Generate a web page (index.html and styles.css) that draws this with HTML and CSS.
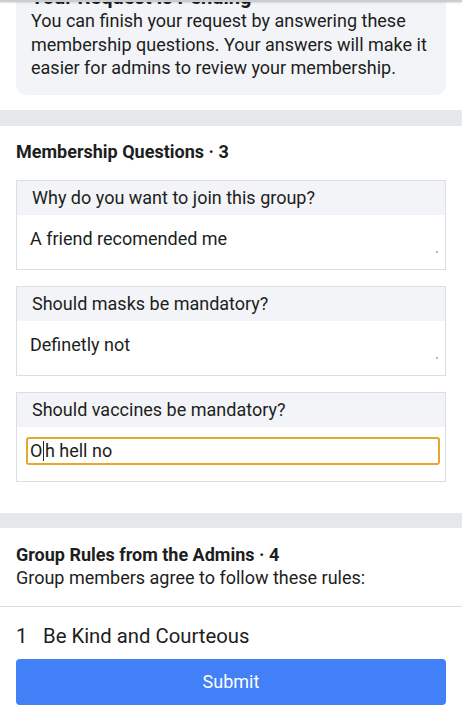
FILE: index.html
```html
<!DOCTYPE html>
<html>
<head>
<meta charset="utf-8">
<link rel="stylesheet" href="styles.css">
</head>
<body>
<div class="topbar"></div>
<div class="pending">
  <h2 class="pending-title">Your Request Is Pending</h2>
  <p class="pending-text">You can finish your request by answering these membership questions. Your answers will make it easier for admins to review your membership.</p>
</div>
<div class="band first"></div>
<section class="questions">
  <h3 class="heading">Membership Questions · 3</h3>
  <div class="qbox">
    <div class="qhead">Why do you want to join this group?</div>
    <div class="qanswer">A friend recomended me<span class="handle"></span></div>
  </div>
  <div class="qbox">
    <div class="qhead">Should masks be mandatory?</div>
    <div class="qanswer">Definetly not<span class="handle"></span></div>
  </div>
  <div class="qbox">
    <div class="qhead">Should vaccines be mandatory?</div>
    <div class="qinput-wrap">
      <div class="qinput">O<span class="caret"></span>h hell no</div>
    </div>
  </div>
</section>
<div class="band second"></div>
<section class="rules">
  <h3 class="heading">Group Rules from the Admins · 4</h3>
  <p class="rules-sub">Group members agree to follow these rules:</p>
</section>
<div class="divider"></div>
<div class="rule"><span class="rule-num">1</span><span>Be Kind and Courteous</span></div>
<div class="actions"><button class="submit">Submit</button></div>
</body>
</html>
```
FILE: styles.css
```css
html, body {
  margin: 0;
  padding: 0;
  background: #ffffff;
  font-family: Roboto, "Noto Sans", Arial, sans-serif;
  color: #1c1e21;
  overflow: hidden;
}
.topbar {
  position: absolute;
  top: 0;
  left: 0;
  right: 0;
  height: 2px;
  background: #c9ccd3;
  box-shadow: 0 1px 2px rgba(0,0,0,0.12);
  z-index: 2;
}
.pending {
  margin: -27px 16px 0;
  padding: 12px 15px 15px;
  background: #f3f4f7;
  border-radius: 10px;
}
.pending-title {
  margin: 0;
  font-size: 20px;
  line-height: 24px;
  font-weight: 700;
}
.pending-text {
  margin: 0;
  font-size: 18px;
  line-height: 23.5px;
  color: #1c1e21;
}
.band {
  height: 16px;
  background: #e6e7eb;
}
.band.first { margin-top: 15px; }
.band.second { margin-top: 31px; height: 15px; }
.questions {
  padding: 15px 16px 0;
}
.heading {
  margin: 0;
  font-size: 18px;
  line-height: 22px;
  font-weight: 700;
}
.questions .heading { margin-bottom: 17px; }
.qbox {
  border: 1px solid #dcdee2;
  margin-bottom: 16px;
}
.qbox:last-child { margin-bottom: 0; }
.qhead {
  height: 34px;
  display: flex;
  align-items: center;
  padding-left: 15px;
  background: #f3f4f7;
  font-size: 18px;
}
.qanswer {
  position: relative;
  height: 54px;
  box-sizing: border-box;
  padding: 13px 13px 0;
  font-size: 18px;
  line-height: 22px;
}
.handle {
  position: absolute;
  right: 7px;
  bottom: 16px;
  width: 2px;
  height: 2px;
  background: #b8b8b8;
}
.qinput-wrap {
  padding: 10px 5px 16px 9px;
}
.qinput {
  height: 28px;
  box-sizing: border-box;
  border: 2px solid #e2a92c;
  border-radius: 3px;
  padding-left: 2px;
  display: flex;
  align-items: center;
  font-size: 18px;
}
.caret {
  display: inline-block;
  width: 1.5px;
  height: 20px;
  background: #222;
  margin: 0 0.5px;
}
.rules {
  padding: 16px 16px 16px;
}
.rules-sub {
  margin: 0;
  font-size: 18px;
  line-height: 24px;
  color: #1c1e21;
}
.divider {
  height: 1px;
  background: #dadde1;
}
.rule {
  padding: 17px 16px 0;
  display: flex;
  font-size: 20.3px;
  line-height: 24px;
}
.rule-num {
  width: 27px;
}
.actions {
  padding: 11px 16px 0;
}
.submit {
  display: block;
  width: 100%;
  height: 46px;
  border: none;
  border-radius: 4px;
  background: #4180f6;
  color: #ffffff;
  font-family: Roboto, "Noto Sans", Arial, sans-serif;
  font-size: 18px;
}
```
